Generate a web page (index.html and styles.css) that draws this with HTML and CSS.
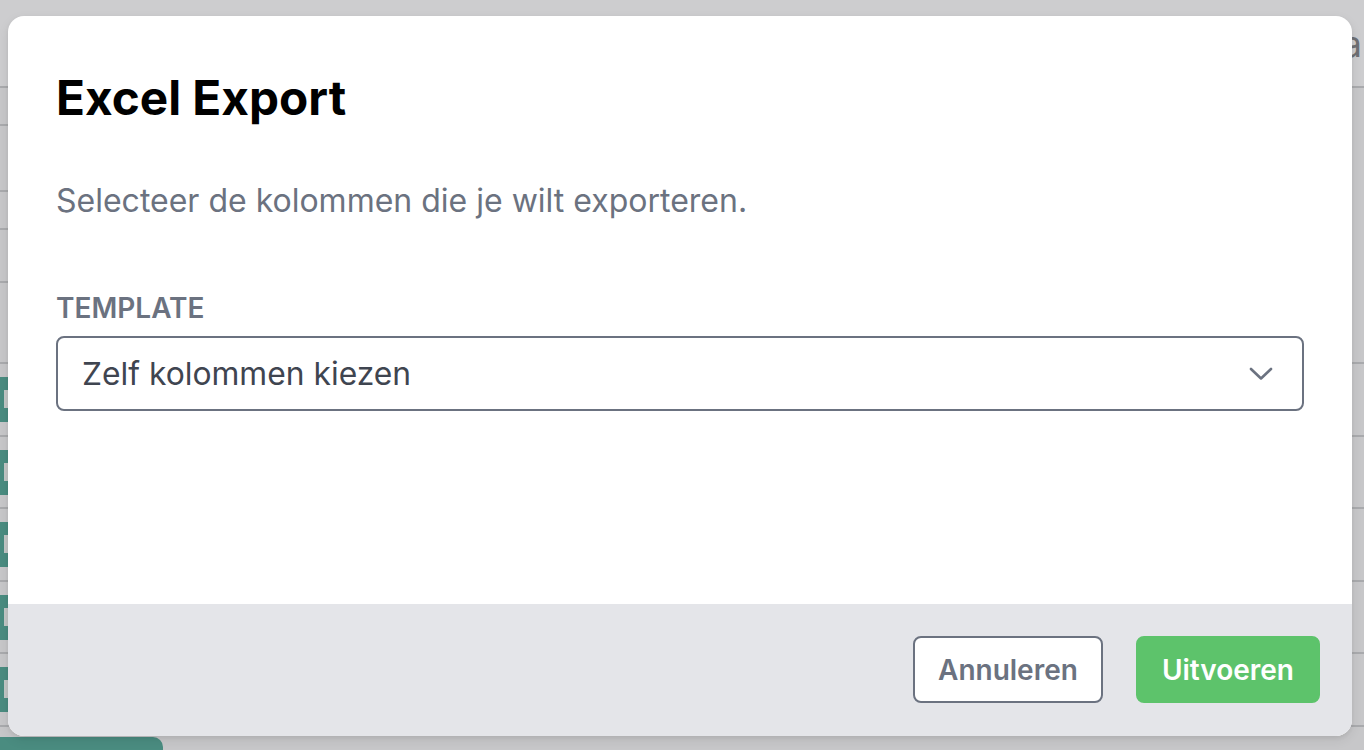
FILE: index.html
```html
<!DOCTYPE html>
<html lang="nl">
<head>
<meta charset="utf-8">
<title>Excel Export</title>
<link rel="stylesheet" href="styles.css">
</head>
<body>
<div class="app">
  <header class="app-header">
    <span class="app-title">Nieuwe data</span>
  </header>
  <section class="app-top">
    <div class="side">
      <div class="side-row r1"></div>
      <div class="side-row r2"></div>
      <div class="side-row r3"></div>
      <div class="side-row r4"></div>
    </div>
  </section>
  <div class="app-rows">
    <div class="app-row"><span class="tag"><i></i></span></div>
    <div class="app-row"><span class="tag"><i></i></span></div>
    <div class="app-row"><span class="tag"><i></i></span></div>
    <div class="app-row"><span class="tag"><i></i></span></div>
    <div class="app-row"><span class="tag"><i></i></span></div>
  </div>
  <div class="app-bottom"><span class="bottom-btn"></span></div>
</div>

<div class="overlay">
  <div class="modal" role="dialog" aria-labelledby="modal-title">
    <div class="modal-body">
      <h1 class="modal-title" id="modal-title">Excel Export</h1>
      <p class="modal-desc">Selecteer de kolommen die je wilt exporteren.</p>
      <label class="field-label">Template</label>
      <div class="select">
        <span class="select-value">Zelf kolommen kiezen</span>
        <svg class="chevron" width="24" height="14" viewBox="0 0 24 14" fill="none">
          <path d="M2 2 L12 11.5 L22 2" stroke="#6b7280" stroke-width="2.6" stroke-linecap="round" stroke-linejoin="round"/>
        </svg>
      </div>
    </div>
    <div class="modal-footer">
      <button class="btn btn-secondary">Annuleren</button>
      <button class="btn btn-primary">Uitvoeren</button>
    </div>
  </div>
</div>
</body>
</html>
```
FILE: styles.css
```css
* { box-sizing: border-box; }

html, body {
  margin: 0;
  padding: 0;
  width: 1364px;
  height: 750px;
  overflow: hidden;
  background: #c7c7c9;
  font-family: Inter, "Noto Sans", "Liberation Sans", sans-serif;
}

/* ---------- dimmed app behind the dialog ---------- */
.app {
  width: 1364px;
  height: 750px;
  display: flex;
  flex-direction: column;
}

.app-header {
  height: 88px;
  flex: none;
  border-bottom: 2px solid #a9aaad;
  background: #cdcdcf;
  display: flex;
  justify-content: flex-end;
  align-items: flex-start;
  padding-top: 24px;
  padding-right: 2px;
}

.app-title {
  font-size: 36px;
  line-height: 40px;
  color: #6e6f73;
}

.app-top {
  height: 276px;
  flex: none;
  border-bottom: 2px solid #a9aaad;
}

.side {
  width: 40px;
  display: flex;
  flex-direction: column;
}

.side-row { border-bottom: 2px solid #a9aaad; }
.side-row.r1 { height: 38px; }
.side-row.r2 { height: 66px; }
.side-row.r3 { height: 38px; }
.side-row.r4 { height: 53px; }

.app-rows {
  display: flex;
  flex-direction: column;
}

.app-row {
  height: 72.6px;
  border-bottom: 2px solid #a9aaad;
  padding-top: 13px;
}

.tag {
  display: block;
  width: 60px;
  height: 45px;
  background: #4a8c80;
  position: relative;
}

.tag i {
  position: absolute;
  left: 4px;
  top: 13px;
  width: 6px;
  height: 18px;
  background: #c2c6c5;
}

.app-bottom {
  padding-top: 10px;
}

.bottom-btn {
  display: block;
  width: 163px;
  height: 40px;
  background: #4a8c80;
  border-radius: 0 10px 0 0;
}

/* ---------- overlay + dialog ---------- */
.overlay {
  position: absolute;
  inset: 0;
}

.modal {
  position: absolute;
  left: 8px;
  top: 16px;
  width: 1344px;
  height: 720px;
  background: #ffffff;
  border-radius: 16px;
  overflow: hidden;
  display: flex;
  flex-direction: column;
  box-shadow: 0 4px 12px rgba(0, 0, 0, 0.08), 0 2px 4px rgba(0, 0, 0, 0.06);
}

.modal-body {
  flex: 1;
  padding: 54px 48px 0 48px;
  display: flex;
  flex-direction: column;
}

.modal-title {
  margin: 0;
  font-size: 47.7px;
  line-height: 56px;
  font-weight: 700;
  color: #000000;
}

.modal-desc {
  margin: 55px 0 0 0;
  font-size: 32px;
  line-height: 40px;
  font-weight: 400;
  color: #6b7280;
}

.field-label {
  margin-top: 71px;
  font-size: 28px;
  line-height: 32px;
  font-weight: 600;
  color: #6b7280;
  text-transform: uppercase;
}

.select {
  margin-top: 12px;
  height: 75px;
  border: 2px solid #6b7280;
  border-radius: 8px;
  display: flex;
  align-items: center;
  justify-content: space-between;
  padding: 0 29px 0 24px;
}

.select-value {
  font-size: 31.8px;
  line-height: 40px;
  color: #3f4550;
}

.chevron { display: block; }

.modal-footer {
  height: 132px;
  flex: none;
  background: #e4e5e9;
  display: flex;
  justify-content: flex-end;
  align-items: flex-start;
  gap: 33px;
  padding: 32px 32px 0 0;
}

.btn {
  height: 67px;
  border-radius: 8px;
  font-family: inherit;
  font-size: 28px;
  font-weight: 600;
  cursor: pointer;
}

.btn-secondary {
  background: #ffffff;
  border: 2px solid #6b7280;
  color: #6b7280;
  padding: 0 23px;
}

.btn-primary {
  background: #5dc36b;
  border: 2px solid #5dc36b;
  color: #ffffff;
  padding: 0 24px;
}
```
